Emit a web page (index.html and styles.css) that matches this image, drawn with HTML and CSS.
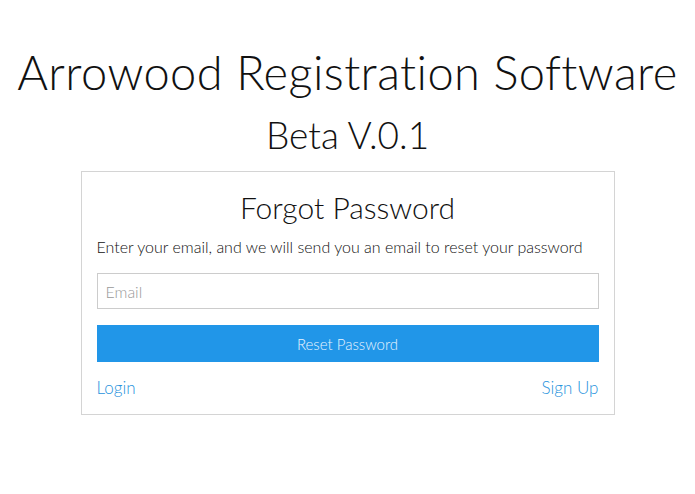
FILE: index.html
```html
<!DOCTYPE html>
<html>
<head>
    <title>Forgot Password</title>
    <link rel="stylesheet" href="styles.css">
</head>
<body>
    <h1 class="app-title">Arrowood Registration Software</h1>
    <h2 class="app-version">Beta V.0.1</h2>
    <div class="card">
        <h3 class="card-title">Forgot Password</h3>
        <p class="card-text">Enter your email, and we will send you an email to reset your password</p>
        <input class="email-input" type="email" placeholder="Email">
        <button class="reset-button">Reset Password</button>
        <div class="card-links">
            <a href="#">Login</a>
            <a href="#">Sign Up</a>
        </div>
    </div>
</body>
</html>
```

FILE: styles.css
```css
body {
    margin: 0;
    background-color: #fff;
    font-family: "Lato", "Open Sans", sans-serif;
    color: #111;
    display: flex;
    flex-direction: column;
    align-items: center;
}
.app-title {
    margin: 44px 0 0;
    font-size: 47px;
    font-weight: 300;
    line-height: 56px;
    letter-spacing: 0.4px;
}
.app-version {
    margin: 13px 0 0;
    font-size: 37px;
    font-weight: 300;
    line-height: 44px;
}
.card {
    margin-top: 14px;
    width: 534px;
    box-sizing: border-box;
    border: 1px solid #d4d4d4;
    padding: 15px 15px 16px 15px;
    display: flex;
    flex-direction: column;
}
.card-title {
    margin: 0;
    text-align: center;
    font-size: 30px;
    font-weight: 300;
    line-height: 40px;
}
.card-text {
    margin: 10px 0 16px;
    font-size: 16px;
    font-weight: 300;
    line-height: 20px;
    color: #111;
}
.email-input {
    height: 36px;
    box-sizing: border-box;
    border: 1px solid #ccc;
    padding: 0 8px;
    font-family: inherit;
    font-size: 16px;
    font-weight: 300;
}
.email-input::placeholder {
    color: #999;
}
.reset-button {
    margin-top: 16px;
    height: 37px;
    border: none;
    background-color: #2196e8;
    color: #e8f4ff;
    font-family: inherit;
    font-size: 15px;
    font-weight: 300;
}
.card-links {
    margin-top: 16px;
    display: flex;
    justify-content: space-between;
    font-size: 17px;
    line-height: 20px;
}
.card-links a {
    color: #2893dd;
    text-decoration: none;
    font-weight: 300;
}
```
